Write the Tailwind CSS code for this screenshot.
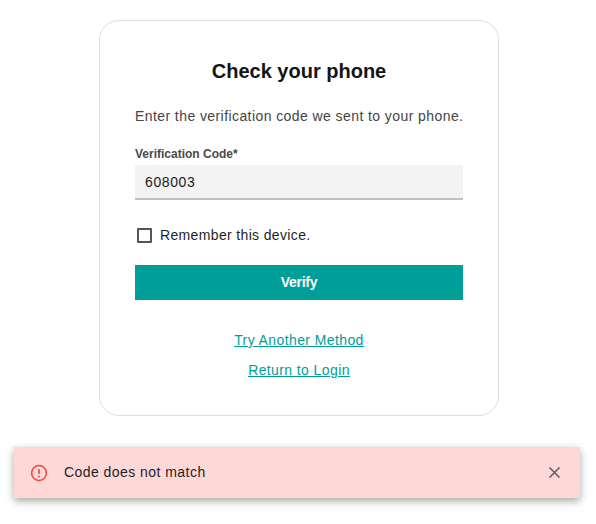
<!DOCTYPE html>
<html lang="en">
<head>
  <meta charset="UTF-8">
  <meta name="viewport" content="width=device-width, initial-scale=1.0">
  <title>Check your phone</title>
  <script src="https://cdn.jsdelivr.net/npm/@tailwindcss/browser@4"></script>
</head>
<body class="bg-white h-[524px] overflow-hidden font-['Liberation_Sans',Arial,sans-serif]">
  <main class="pt-5 flex flex-col items-start">
    <!-- Card -->
    <section class="ml-[99px] w-[400px] h-[396px] border border-[#dedede] rounded-[20px] px-[35px] pt-[38px]">
      <h1 class="text-[20px] leading-6 font-bold text-[#141414] text-center">Check your phone</h1>
      <p class="mt-[23px] text-[14px] leading-5 tracking-[0.42px] text-[#444444] whitespace-nowrap">Enter the verification code we sent to your phone.</p>

      <label class="block mt-[20px] text-[12px] leading-4 font-bold text-[#4a4a4a]">Verification Code*</label>
      <div class="mt-[3px] h-[35px] bg-[#f3f3f3] border-b-2 border-[#c2c2c2] px-2.5 pt-px flex items-center text-[14px] tracking-[0.6px] text-[#1a1a1a]">608003</div>

      <label class="mt-[27px] ml-0.5 flex items-center h-[17px]">
        <span class="w-[15px] h-[15px] border-2 border-[#555555] rounded-[1px]"></span>
        <span class="ml-2 text-[14px] tracking-[0.35px] text-[#1f1f1f]">Remember this device.</span>
      </label>

      <button class="mt-[21px] w-full h-[35px] bg-[#009e99] text-white text-[14px] font-bold tracking-[-0.3px]">Verify</button>

      <div class="mt-[30px] flex flex-col items-center gap-2.5 text-[14px] leading-5 tracking-[0.4px] text-[#009e99]">
        <a href="#" class="underline">Try Another Method</a>
        <a href="#" class="underline">Return to Login</a>
      </div>
    </section>

    <!-- Error toast -->
    <div class="ml-3.5 mt-[31px] w-[566px] h-[51px] bg-[#fdd8d6] shadow-[0_3px_8px_rgba(0,0,0,0.35)] flex items-center pl-4 pr-5 text-[14px] tracking-[0.45px] text-[#1f1f1f]">
      <svg class="w-[18px] h-[18px]" viewBox="0 0 18 18" fill="none">
        <circle cx="9" cy="9" r="7.4" stroke="#f5423c" stroke-width="1.5"/>
        <path d="M9 5v5" stroke="#f5423c" stroke-width="1.6"/>
        <circle cx="9" cy="12.4" r="1" fill="#f5423c"/>
      </svg>
      <span class="ml-4">Code does not match</span>
      <svg class="ml-auto w-[11px] h-[11px]" viewBox="0 0 11 11" fill="none">
        <path d="M0.5 0.5l10 10M10.5 0.5l-10 10" stroke="#5c5c5c" stroke-width="1.5"/>
      </svg>
    </div>
  </main>
</body>
</html>
